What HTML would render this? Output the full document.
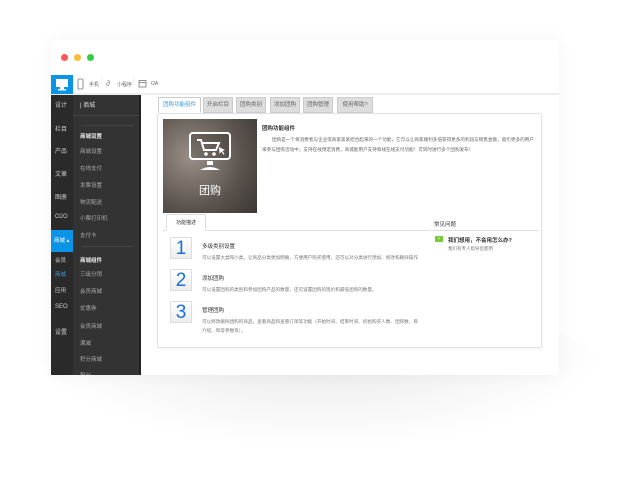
<!DOCTYPE html>
<html><head><meta charset="utf-8">
<style>
*{margin:0;padding:0;box-sizing:border-box}
body{width:640px;height:478px;background:#fff;font-family:"Liberation Sans","Noto Sans CJK SC",sans-serif;position:relative;overflow:hidden;font-size:6px;color:#555}
.shadow{position:absolute;left:30px;top:300px;width:580px;height:150px;border-radius:50%;background:radial-gradient(ellipse at 50% 30%,rgba(0,0,0,.09),rgba(0,0,0,0) 70%)}
.win{position:absolute;left:51px;top:40px;width:508px;height:335px;background:#fff;border-radius:5px 5px 0 0;overflow:hidden;box-shadow:0 0 18px rgba(0,0,0,.05)}
.dot{position:absolute;top:14px;width:7px;height:7px;border-radius:50%}
.tb{position:absolute;left:0;top:34px;width:508px;height:21px;border-bottom:2px solid #eee}
.a{position:absolute;color:#666;font-size:5px}
.s1{position:absolute;left:0;top:55px;width:22px;height:280px;background:#2a2a2a}
.s2{position:absolute;left:22px;top:55px;width:68px;height:280px;background:#333;border-right:2px solid #222}
.s1 div,.s2 div{position:absolute;color:#ccc;font-size:6px}
.s1 div{left:4px}
.s2 div{left:7px;color:#aaa;font-size:5.5px}
.tab{position:absolute;top:57px;height:16px;background:#ddd;border:1px solid #ccc;font-size:5.5px;color:#666;text-align:center;line-height:15px}
.panel{position:absolute;left:106px;top:73px;width:385px;height:235px;border:1px solid #e2e2e2;border-radius:2px;box-shadow:0 1px 2px rgba(0,0,0,.05)}
.num{position:absolute;left:12px;width:22px;height:22px;border:1px solid #ddd;background:linear-gradient(#fff,#eee);color:#1a6fd8;font-size:19px;text-align:center;line-height:21px}
.t{position:absolute;left:44px;font-size:5.5px;color:#333}
.d{position:absolute;left:44px;font-size:4.6px;color:#777;white-space:nowrap}
</style></head><body>
<div class="shadow"></div>
<div class="win">
<div class="dot" style="left:10px;background:#f55"></div>
<div class="dot" style="left:23px;background:#fb3"></div>
<div class="dot" style="left:36px;background:#3c4"></div>
<div class="tb">
<div style="position:absolute;left:0;top:1px;width:22px;height:19px;background:#0a94e8"><svg width="22" height="19"><rect x="5" y="4" width="12" height="8" fill="#fff"/><rect x="9" y="12" width="4" height="2" fill="#fff"/><rect x="7" y="14" width="8" height="1.5" fill="#fff"/></svg></div>
<svg style="position:absolute;left:26px;top:4px" width="8" height="12"><rect x="1" y="1" width="5" height="10" rx="1" fill="none" stroke="#777" stroke-width=".8"/></svg>
<div class="a" style="left:38px;top:7px">手机</div>
<div class="a" style="left:50px;top:3px;color:#ddd">|</div>
<div class="a" style="left:55px;top:5px;font-size:8px;color:#888">∂</div>
<div class="a" style="left:66px;top:7px">小程序</div>
<div class="a" style="left:82px;top:3px;color:#ddd">|</div>
<svg style="position:absolute;left:87px;top:5px" width="9" height="9"><rect x="1" y="1.5" width="7" height="6.5" fill="none" stroke="#777" stroke-width=".8"/><line x1="1" y1="3.5" x2="8" y2="3.5" stroke="#777" stroke-width=".8"/></svg>
<div class="a" style="left:100px;top:7px">OA</div>
</div>
<div class="s1">
<div style="top:5px">设计</div><div style="top:29px">栏目</div><div style="top:51px">产品</div><div style="top:74px">文章</div><div style="top:97px">图册</div><div style="top:119px">O2O</div>
<div style="left:0;top:135px;width:22px;height:22px;background:#0a94e8;color:#fff;line-height:22px;padding-left:3px;font-size:5.5px">商城 ▴</div>
<div style="top:161px;font-size:5.5px">会员</div><div style="top:175px;font-size:5.5px;color:#3a9ad9">商城</div><div style="top:191px;font-size:5.5px">应用</div><div style="top:209px">SEO</div><div style="top:232px">设置</div>
</div>
<div class="s2">
<div style="left:7px;top:5px;color:#ddd;font-size:6px">| 商城</div>
<div style="left:0;top:20px;width:66px;height:1px;background:#444"></div>
<div style="left:8px;top:30px;width:53px;height:1px;background:#444"></div>
<div style="top:37px;color:#eee;font-weight:bold">商城设置</div>
<div style="top:52px">商城设置</div><div style="top:69px">在线支付</div><div style="top:86px">发票设置</div><div style="top:103px">物流配送</div><div style="top:119px">小票打印机</div><div style="top:136px">支付卡</div>
<div style="left:8px;top:151px;width:53px;height:1px;background:#444"></div>
<div style="top:161px;color:#eee;font-weight:bold">商城组件</div>
<div style="top:175px">三级分销</div><div style="top:192px">会员商城</div><div style="top:209px">优惠券</div><div style="top:227px">会员商城</div><div style="top:244px">满减</div><div style="top:260px">积分商城</div><div style="top:276px">积分...</div>
</div>
<div class="tab" style="left:107px;width:43px;background:#fff;color:#3a9ad9;border-bottom-color:#fff;z-index:2">团购功能组件</div>
<div class="tab" style="left:152px;width:30px">开启栏目</div>
<div class="tab" style="left:185px;width:30px">团购类别</div>
<div class="tab" style="left:219px;width:30px">添加团购</div>
<div class="tab" style="left:252px;width:30px">团购管理</div>
<div class="tab" style="left:286px;width:36px">使用帮助?</div>
<div class="panel">
<div style="position:absolute;left:5px;top:5px;width:94px;height:94px;background:radial-gradient(circle at 30% 40%,#9a9088,#5a534d 60%,#3a3632)">
<svg style="position:absolute;left:25px;top:12px" width="46" height="42"><rect x="2" y="2" width="40" height="26" rx="3" fill="rgba(0,0,0,.2)" stroke="#fff" stroke-width="2"/><path d="M9 9h4l3 10h12l3-7h-16" fill="none" stroke="#fff" stroke-width="2"/><circle cx="18" cy="23" r="1.8" fill="#fff"/><circle cx="26" cy="23" r="1.8" fill="#fff"/><path d="M31 16l6 3-2.5 1 2 3-1 .7-2-3-2 2z" fill="#fff"/><rect x="19" y="30" width="6" height="4" fill="#fff"/><path d="M12 39q10-6 20 0z" fill="#fff"/></svg>
<div style="position:absolute;left:0;width:94px;top:63px;text-align:center;color:#fff;font-size:11px">团购</div>
</div>
<div style="position:absolute;left:104px;top:10px;font-size:5.5px;color:#333;font-weight:bold">团购功能组件</div>
<div style="position:absolute;left:104px;top:21px;width:276px;font-size:4.6px;line-height:10px;color:#666;text-indent:10px">团购是一个将消费者与企业或商家紧紧结合起来的一个功能，它可以让商家顺利多倍获得更多的利润与销售金额，吸引更多的用户来参与团购活动中，支持在线预定消费，商城能用户支持和线在线支付功能！可同时进行多个团购发布！</div>
<div style="position:absolute;left:8px;top:100px;width:40px;height:17px;border:1px solid #ddd;border-bottom:1px solid #fff;background:#fff;font-size:5px;text-align:center;line-height:16px;z-index:2;color:#333">功能描述</div>
<div style="position:absolute;left:5px;top:116px;width:266px;height:1px;background:#ddd"></div>
<div style="position:absolute;left:276px;top:106px;font-size:5.5px;color:#333">常见问题</div>
<div style="position:absolute;left:273px;top:116px;width:107px;height:1px;background:#ddd"></div>
<div style="position:absolute;left:277px;top:122px;width:8px;height:6px;background:#7c4;color:#fff;font-size:4px;text-align:center;line-height:6px">?</div>
<div style="position:absolute;left:290px;top:122px;font-size:5.5px;color:#333;font-weight:bold">我们想用，不会用怎么办?</div>
<div style="position:absolute;left:290px;top:132px;font-size:4.5px;color:#777">我们有专人指导您使用</div>
<div class="num" style="top:123px">1</div>
<div class="t" style="top:128px">多级类别设置</div>
<div class="d" style="top:141px">可以设置大类和小类，让商品分类更加明确，方便用户购买使用，还可以对分类进行添加、修改和删除操作</div>
<div class="num" style="top:155px">2</div>
<div class="t" style="top:160px">添加团购</div>
<div class="d" style="top:173px">可以设置团购的类别和参加团购产品的数量，还可设置团购的现价和最低团购的数量。</div>
<div class="num" style="top:187px">3</div>
<div class="t" style="top:192px">管理团购</div>
<div class="d" style="top:205px">可以修改删除团购的商品，查看商品和查看订单等功能（开始时间、结束时间、初始购买人数、团购数、目</div>
<div class="d" style="top:214px">介绍、和等参数等）。</div>
</div>
</div>
</body></html>
